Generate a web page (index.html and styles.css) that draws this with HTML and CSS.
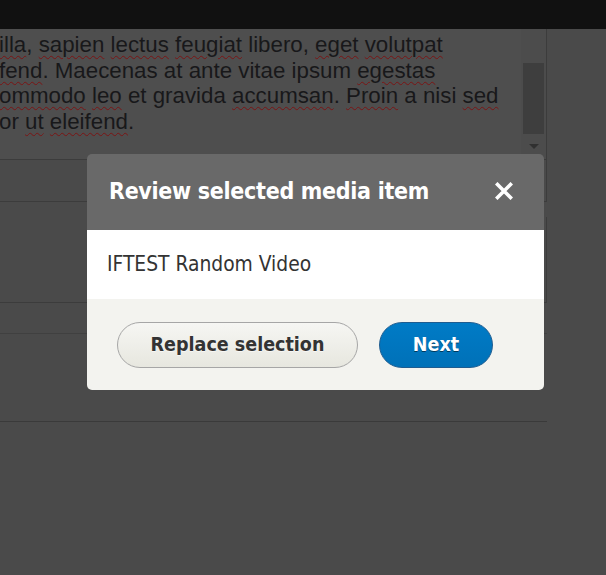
FILE: index.html
```html
<!DOCTYPE html>
<html lang="en">
<head>
<meta charset="utf-8">
<title>Review selected media item</title>
<link rel="stylesheet" href="styles.css">
</head>
<body>
  <div class="toolbar"></div>
  <main class="page">
    <div class="editor">
      <div class="editor-content">
        <p class="line"><span class="sp">illa</span>, <span class="sp">sapien</span> <span class="sp">lectus</span> <span class="sp">feugiat</span> libero, <span class="sp">eget</span> <span class="sp">volutpat</span></p>
        <p class="line"><span class="sp">fend</span>. Maecenas at ante vitae ipsum <span class="sp">egestas</span></p>
        <p class="line"><span class="sp">ommodo</span> <span class="sp">leo</span> et gravida <span class="sp">accumsan</span>. <span class="sp">Proin</span> a nisi <span class="sp">sed</span></p>
        <p class="line">or <span class="sp">ut</span> <span class="sp">eleifend</span>.</p>
      </div>
      <div class="scrollbar">
        <div class="scroll-thumb"></div>
        <div class="scroll-arrow"></div>
      </div>
    </div>
    <div class="editor-status"></div>
    <div class="field-box"></div>
    <div class="row-a"></div>
    <div class="row-b"></div>
  </main>

  <div class="dialog" role="dialog" aria-labelledby="dlg-title">
    <div class="dialog-header">
      <h2 class="dialog-title" id="dlg-title">Review selected media item</h2>
      <button class="dialog-close" aria-label="Close">
        <svg width="18" height="18" viewBox="0 0 18 18"><path d="M2.5 2.5 L15.5 15.5 M15.5 2.5 L2.5 15.5" stroke="#fff" stroke-width="3.6" stroke-linecap="square" fill="none"/></svg>
      </button>
    </div>
    <div class="dialog-body">IFTEST Random Video</div>
    <div class="dialog-footer">
      <button class="btn btn-default">Replace selection</button>
      <button class="btn btn-primary">Next</button>
    </div>
  </div>
</body>
</html>
```

FILE: styles.css
```css
html, body {
  margin: 0;
  padding: 0;
}
body {
  background: #4a4a4a;
  font-family: "Liberation Sans", Arial, sans-serif;
  overflow: hidden;
  height: 575px;
  position: relative;
}
.toolbar {
  height: 29px;
  background: #111111;
}
.page {
  width: 547px;
}
.editor {
  display: flex;
  height: 131px;
  box-sizing: border-box;
  background: #4e4e4e;
  border-right: 1px solid #3c3c3c;
  border-bottom: 1px solid #3c3c3c;
  overflow: hidden;
}
.editor-content {
  flex: 1;
  padding-top: 3px;
  margin-left: -1px;
  color: #18181a;
  font-size: 22.3px;
  line-height: 25.6px;
  white-space: nowrap;
  overflow: hidden;
}
.line {
  margin: 0;
}
.sp {
  text-decoration: underline wavy #7a1414;
  text-decoration-thickness: 1px;
  text-underline-offset: 3px;
}
.scrollbar {
  width: 25px;
  display: flex;
  flex-direction: column;
  align-items: center;
  background: #4c4c4c;
  padding-top: 34px;
  box-sizing: border-box;
}
.scroll-thumb {
  width: 21px;
  height: 71px;
  background: #3e3e3e;
}
.scroll-arrow {
  margin-top: 10px;
  width: 0;
  height: 0;
  border-left: 5px solid transparent;
  border-right: 5px solid transparent;
  border-top: 5px solid #303030;
}
.editor-status {
  height: 42px;
  box-sizing: border-box;
  border-right: 1px solid #3c3c3c;
  border-bottom: 1px solid #3c3c3c;
}
.field-box {
  margin-top: 15px;
  height: 86px;
  box-sizing: border-box;
  border-right: 1px solid #3c3c3c;
  border-bottom: 1px solid #3c3c3c;
}
.row-a {
  height: 31px;
  box-sizing: border-box;
  border-bottom: 1px solid #404040;
}
.row-b {
  height: 88px;
  box-sizing: border-box;
  border-bottom: 1px solid #3a3a3a;
}

/* Dialog */
.dialog {
  position: absolute;
  left: 87px;
  top: 154px;
  width: 457px;
  border-radius: 5px;
  overflow: hidden;
  font-family: "DejaVu Sans Condensed", "DejaVu Sans", sans-serif;
  font-stretch: semi-condensed;
}
.dialog-header {
  height: 76px;
  box-sizing: border-box;
  background: #696969;
  display: flex;
  align-items: center;
  justify-content: space-between;
  padding: 0 31px 2px 22px;
}
.dialog-title {
  margin: 0;
  color: #ffffff;
  font-size: 23px;
  letter-spacing: -0.3px;
  line-height: 28px;
  font-weight: bold;
}
.dialog-close {
  border: 0;
  padding: 0;
  background: none;
  width: 18px;
  height: 18px;
  display: flex;
  cursor: pointer;
}
.dialog-body {
  background: #ffffff;
  color: #333333;
  font-size: 20.8px;
  line-height: 24px;
  height: 69px;
  box-sizing: border-box;
  padding: 22px 18px 23px 20px;
}
.dialog-footer {
  background: #f3f3ef;
  height: 91px;
  box-sizing: border-box;
  padding: 23px 30px 22px;
  display: flex;
  gap: 21px;
}
.btn {
  height: 46px;
  box-sizing: border-box;
  border-radius: 23px;
  padding: 0 32px;
  font-family: inherit;
  font-stretch: semi-condensed;
  font-size: 19.5px;
  font-weight: bold;
  line-height: 1;
  cursor: pointer;
}
.btn-default {
  width: 241px;
  color: #333333;
  background: linear-gradient(to bottom, #f6f6f3, #e7e7df);
  border: 1px solid #a6a6a6;
  text-shadow: 0 1px rgba(255, 255, 255, 0.6);
}
.btn-primary {
  width: 114px;
  color: #ffffff;
  background: linear-gradient(to bottom, #007bc6, #0071b8);
  border: 1px solid #1e5c90;
  text-shadow: 0 1px rgba(0, 0, 0, 0.5);
}
```
